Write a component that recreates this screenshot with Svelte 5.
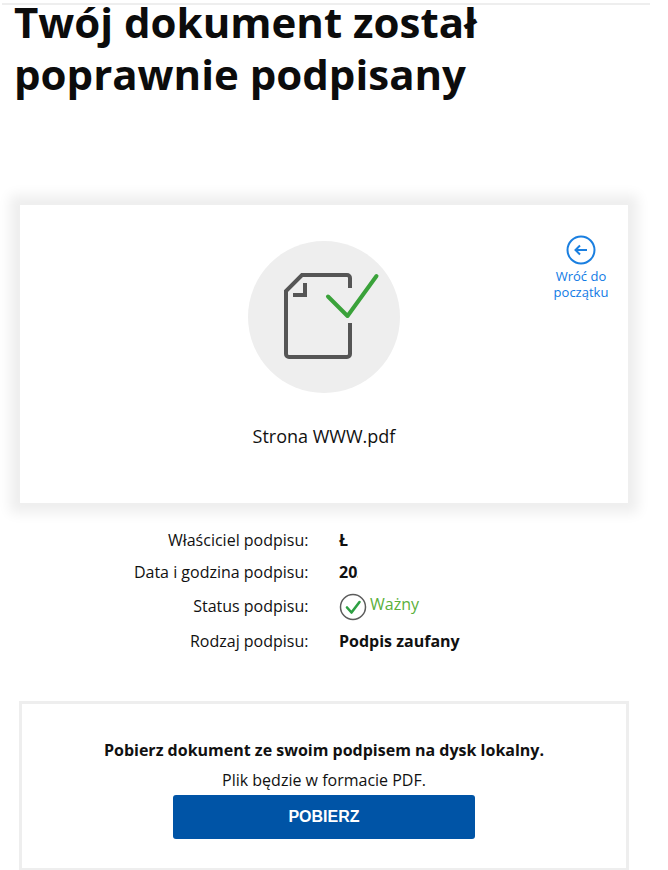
<script>
  const details = [
    { label: 'Właściciel podpisu:', value: 'Ł' },
    { label: 'Data i godzina podpisu:', value: '202', clip: true },
    { label: 'Status podpisu:', status: 'Ważny' },
    { label: 'Rodzaj podpisu:', value: 'Podpis zaufany' }
  ];
</script>

<main>
  <div class="topline"></div>
  <h1>Twój dokument został poprawnie podpisany</h1>

  <section class="card">
    <a class="back" href="#start">
      <svg width="30" height="30" viewBox="0 0 30 30" fill="none" stroke="#1a7fe0" stroke-width="2">
        <circle cx="15" cy="15" r="13.5" />
        <path d="M21 15H9.5M14 10.5 9.5 15l4.500 4.500" stroke-width="2" />
      </svg>
      <span>Wróć do początku</span>
    </a>
    <div class="circle">
      <svg width="152" height="152" viewBox="0 0 152 152" fill="none">
        <path d="M102 47V37a3 3 0 0 0-3-3H54L38 50v63a3 3 0 0 0 3 3h58a3 3 0 0 0 3-3V82" stroke="#555" stroke-width="4" />
        <path d="M45 54H57V42" stroke="#555" stroke-width="4" />
        <path d="M80 55.500 99.500 75 128.500 35" stroke="#3aa23a" stroke-width="4" stroke-linecap="round" stroke-linejoin="round" />
      </svg>
    </div>
    <p class="filename">Strona WWW.pdf</p>
  </section>

  <dl class="details">
    {#each details as row}
      <div class="row" class:has-status={row.status}>
        <dt>{row.label}</dt>
        <dd>
          {#if row.status}
            <span class="status">
              <svg width="28" height="28" viewBox="0 0 28 28" fill="none">
                <circle cx="14" cy="14" r="12.500" stroke="#5c5c5c" stroke-width="1.500" />
                <path d="M8 14.500l4.500 5 8-10.500" stroke="#2ea043" stroke-width="2.600" stroke-linecap="round" stroke-linejoin="round" />
              </svg>
              <span class="valid">{row.status}</span>
            </span>
          {:else}
            <span class:clip={row.clip}>{row.value}</span>
          {/if}
        </dd>
      </div>
    {/each}
  </dl>

  <section class="download">
    <p class="lead">Pobierz dokument ze swoim podpisem na dysk lokalny.</p>
    <p class="format">Plik będzie w formacie PDF.</p>
    <button type="button">POBIERZ</button>
  </section>
</main>

<style>
  :global(body) {
    margin: 0;
    background: #fff;
    overflow: hidden;
  }

  main {
    width: 650px;
    height: 870px;
    overflow: hidden;
    box-sizing: border-box;
    padding: 0 22px 0 20px;
    font-family: 'Open Sans', sans-serif;
    font-size: 16px;
    color: #111;
  }

  .topline {
    height: 2px;
    margin: 3px -22px 0 -18px;
    background: #eee;
  }

  h1 {
    margin: -9px 0 105px -6px;
    font-size: 42px;
    line-height: 52px;
    font-weight: 700;
    color: #0c0c0c;
    width: 540px;
  }

  .card {
    position: relative;
    height: 298px;
    background: #fff;
    box-shadow: 0 0 12px 10px #eee;
    display: flex;
    flex-direction: column;
    align-items: center;
    padding-top: 36px;
    box-sizing: border-box;
  }

  .circle {
    width: 152px;
    height: 152px;
    border-radius: 50%;
    background: #eee;
  }

  .filename {
    margin: 31px 0 0;
    font-size: 18px;
    line-height: 24px;
  }

  .back {
    position: absolute;
    top: 30px;
    right: 14px;
    width: 66px;
    display: flex;
    flex-direction: column;
    align-items: center;
    gap: 3px;
    color: #0f7ae5;
    font-size: 13px;
    line-height: 16px;
    text-align: center;
    text-decoration: none;
  }

  .details {
    margin: 24px 0 0;
  }

  .row {
    display: grid;
    grid-template-columns: 288.500px 1fr;
    column-gap: 30.500px;
    height: 32px;
    line-height: 26px;
  }

  .row.has-status {
    height: 35px;
    padding-top: 2px;
  }

  dt {
    text-align: right;
  }

  dd {
    margin: 0;
    font-weight: 700;
  }

  .clip {
    display: block;
    width: 19px;
    overflow: hidden;
  }

  .status {
    display: flex;
    align-items: flex-start;
    gap: 3px;
    font-weight: 400;
  }

  .valid {
    color: #5bb03a;
    line-height: 22px;
  }

  .download {
    margin: 41px -1px 0;
    border: 3px solid #eee;
    padding: 34px 0 0;
    height: 170px;
    box-sizing: border-box;
    text-align: center;
  }

  .lead {
    margin: 0;
    font-weight: 700;
    line-height: 24px;
  }

  .format {
    margin: 7px 0 0;
    line-height: 22px;
  }

  button {
    display: block;
    margin: 4px auto 0;
    width: 302px;
    height: 44px;
    border: 0;
    border-radius: 3px;
    background: #0054a6;
    color: #fff;
    font-family: 'Liberation Sans', sans-serif;
    font-size: 16px;
    font-weight: 700;
  }
</style>
